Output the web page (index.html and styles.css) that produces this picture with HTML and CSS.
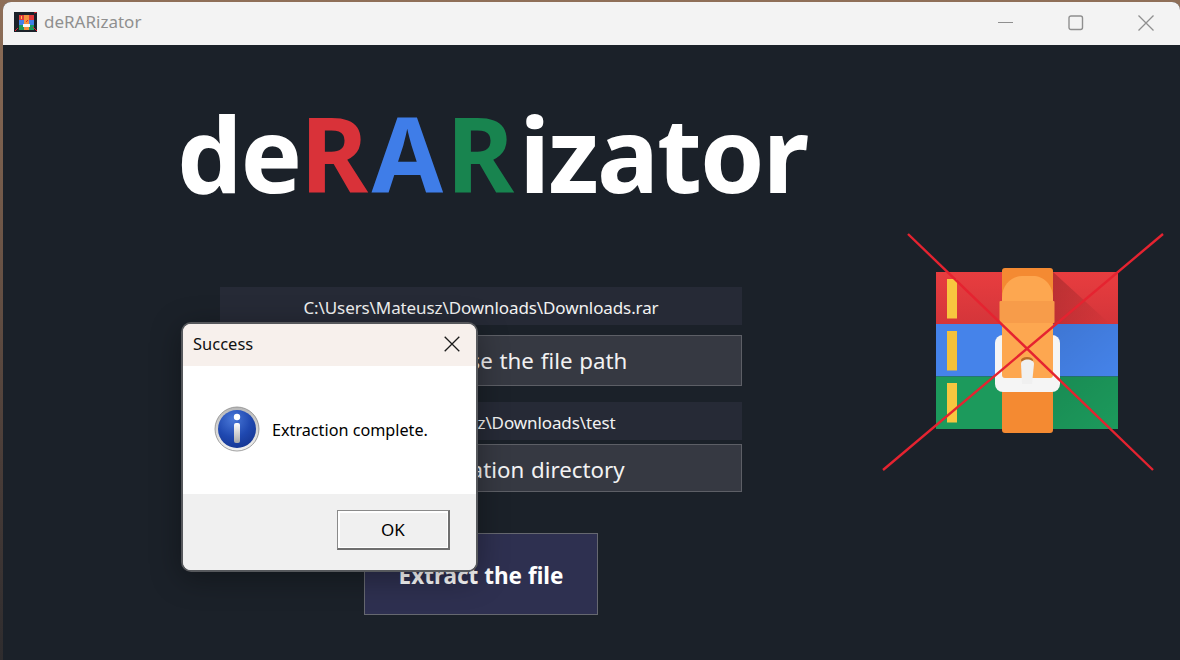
FILE: index.html
```html
<!DOCTYPE html>
<html lang="en">
<head>
<meta charset="utf-8">
<title>deRARizator</title>
<link rel="stylesheet" href="styles.css">
</head>
<body>
<div class="window">
  <header class="titlebar">
    <div class="app">
      <svg class="app-icon" width="23" height="20" viewBox="0 0 23 20">
        <rect width="23" height="20" fill="#1b2129"/>
        <rect x="5" y="3" width="15" height="5" fill="#e0393c"/>
        <rect x="5" y="8" width="15" height="5" fill="#4280e8"/>
        <rect x="5" y="13" width="15" height="5" fill="#1c9a5c"/>
        <rect x="10" y="3" width="5" height="15" fill="#f4913d"/>
        <rect x="9" y="12" width="7" height="3" fill="#f5f5f5"/>
        <path d="M1 19 4 16M19 15 23 19M20 1 23 0M12 10 14 8" stroke="#e8202c" stroke-width="1"/>
        <rect x="7" y="4" width="1" height="3" fill="#f6c842"/>
      </svg>
      <span class="app-name">deRARizator</span>
    </div>
    <div class="controls">
      <svg class="ctl" width="16" height="16" viewBox="0 0 16 16"><path d="M0 7.5H15" stroke="#8f8f8f" stroke-width="1.2"/></svg>
      <svg class="ctl" width="16" height="16" viewBox="0 0 16 16"><rect x="1" y="1" width="13.5" height="13.5" rx="2" fill="none" stroke="#8f8f8f" stroke-width="1.4"/></svg>
      <svg class="ctl" width="16" height="16" viewBox="0 0 16 16"><path d="M.5.5 15.5 15.5M15.5.5.5 15.5" stroke="#8f8f8f" stroke-width="1.3"/></svg>
    </div>
  </header>
  <main class="main">
    <h1 class="logo-title">de<span class="r1">R</span><span class="a1">A</span><span class="r2">R</span>izator</h1>
    <div class="content">
      <section class="form">
        <div class="path p1">C:\Users\Mateusz\Downloads\Downloads.rar</div>
        <button class="btn b1">Please choose the file path</button>
        <div class="path p2">C:\Users\Mateusz\Downloads\test</div>
        <button class="btn b2">Select destination directory</button>
        <button class="extract">Extract the file</button>
      </section>
      <svg class="rar" width="282" height="238" viewBox="882 233 282 238">
        <defs>
          <linearGradient id="red" x1="0" y1="0" x2="0" y2="1"><stop offset="0" stop-color="#e83d3f"/><stop offset="1" stop-color="#d4353a"/></linearGradient>
          <linearGradient id="sh" x1="0" y1="0" x2="1" y2="1"><stop offset="0" stop-color="#000" stop-opacity=".2"/><stop offset="1" stop-color="#000" stop-opacity="0"/></linearGradient>
        </defs>
        <rect x="936" y="272" width="182" height="52" fill="url(#red)"/>
        <rect x="936" y="324" width="182" height="52.500" fill="#4583ea"/>
        <rect x="936" y="376.500" width="182" height="52.500" fill="#1c9a5c"/>
        <path d="M1053 272 1110 324H1053Z" fill="url(#sh)"/>
        <path d="M1053 324H1118V376.500H1053Z" fill="url(#sh)" opacity=".5"/>
        <path d="M1053 376.500H1118V429H1053Z" fill="url(#sh)" opacity=".5"/>
        <rect x="947" y="279" width="10" height="39.500" fill="#f8c63f"/>
        <rect x="947" y="331" width="10" height="39.500" fill="#f3c13a"/>
        <rect x="947" y="383" width="10" height="39.500" fill="#f8c63f"/>
        <rect x="1002" y="268" width="51" height="165" rx="3" fill="#f48a32"/>
        <rect x="995" y="335" width="65" height="57" rx="8" fill="#f5f5f5"/>
        <rect x="1002" y="322" width="51" height="56" rx="3" fill="#fda750"/>
        <path d="M1002 322V298C1002 284 1012 276 1022 276H1033C1043 276 1053 284 1053 298V322Z" fill="#fda750"/>
        <rect x="999.500" y="301" width="55" height="22" rx="1" fill="#f79c4a"/>
        <ellipse cx="1027" cy="360" rx="6" ry="3" fill="#b86a25"/>
        <path d="M1022 384 1021 364C1021 358 1034 358 1034 364L1032 384Z" fill="#f0f0f0"/>
        <path d="M908 234 1153 470" stroke="#e52330" stroke-width="2.400"/>
        <path d="M1163 234 883 470" stroke="#e52330" stroke-width="2.400"/>
      </svg>
    </div>
  </main>
  <div class="dialog">
    <div class="dlg-head">
      <span class="dlg-title">Success</span>
      <svg width="16" height="16" viewBox="0 0 16 16"><path d="M.7.7 15.300 15.300M15.300.7.7 15.300" stroke="#1a1a1a" stroke-width="1.300"/></svg>
    </div>
    <div class="dlg-body">
      <svg class="info" width="46" height="46" viewBox="0 0 46 46">
        <defs>
          <radialGradient id="ib" cx=".4" cy=".25" r=".85"><stop offset="0" stop-color="#4a78d8"/><stop offset=".55" stop-color="#1f48b0"/><stop offset="1" stop-color="#14338e"/></radialGradient>
          <linearGradient id="ir" x1="0" y1="0" x2="0" y2="1"><stop offset="0" stop-color="#b8b8b8"/><stop offset="1" stop-color="#f2f2f2"/></linearGradient>
          <linearGradient id="is" x1="0" y1="0" x2="0" y2="1"><stop offset="0" stop-color="#fff"/><stop offset="1" stop-color="#a8a8a8"/></linearGradient>
        </defs>
        <circle cx="23" cy="23" r="22" fill="url(#ir)" stroke="#8a8a8a" stroke-width=".8"/>
        <circle cx="23" cy="23" r="19" fill="url(#ib)"/>
        <circle cx="23" cy="11" r="3.200" fill="#fff"/>
        <rect x="20" y="17" width="6" height="20" rx="2" fill="url(#is)"/>
      </svg>
      <span class="dlg-msg">Extraction complete.</span>
    </div>
    <div class="dlg-foot">
      <button class="ok">OK</button>
    </div>
  </div>
</div>
</body>
</html>
```
FILE: styles.css
```css
* { box-sizing: border-box; }
html, body { margin: 0; height: 100%; }
body {
  width: 1180px;
  height: 660px;
  overflow: hidden;
  padding: 2px 0 0 3px;
  background: linear-gradient(180deg, #8f6f58, #6e5647 35%, #4a3d38 70%, #2e2c2e);
  font-family: "Noto Sans", "Open Sans", sans-serif;
}
.window {
  position: relative;
  height: 658px;
  border-radius: 8px 8px 0 0;
  overflow: hidden;
  display: flex;
  flex-direction: column;
  background: #1b2129;
}
.titlebar {
  height: 43px;
  flex: none;
  background: #f3f3f3;
  display: flex;
  align-items: center;
  justify-content: space-between;
}
.app { display: flex; align-items: center; gap: 7px; padding: 0 0 3px 11px; }
.app-icon { display: block; }
.app-name { font-size: 17px; color: #8f8f8f; line-height: 20px; }
.controls { display: flex; gap: 54px; padding: 0 26px 2px 0; }
.ctl { display: block; }
.main { flex: 1; display: flex; flex-direction: column; color: #fff; }
.logo-title {
  margin: 48px 0 0 174px;
  font-size: 103.500px;
  line-height: 120px;
  letter-spacing: -2px;
  font-weight: 700;
  color: #fff;
  white-space: nowrap;
}
.r1 { color: #d93239; letter-spacing: 3.500px; }
.a1 { color: #3f7de8; letter-spacing: 3px; }
.r2 { color: #18844f; letter-spacing: 5px; }
.content { display: flex; margin-top: 74px; align-items: flex-start; }
.form { width: 522px; margin-left: 217px; display: flex; flex-direction: column; align-items: center; }
.path {
  width: 100%;
  background: #262a36;
  text-align: center;
  font-size: 17px;
  letter-spacing: -.1px;
  color: #f2f2f2;
  height: 38px;
  line-height: 38px;
  padding-top: 2px;
}
.btn {
  width: 100%;
  background: #363942;
  border: 1px solid #5d5f66;
  color: #f2f2f2;
  font: inherit;
  font-size: 22.300px;
  word-spacing: 1px;
  padding: 0;
}
.b1 { height: 51px; margin-top: 10px; padding-left: 9px; }
.p2 { margin-top: 16px; }
.b2 { height: 48px; margin-top: 4px; padding: 2px 0 0; }
.extract {
  width: 234px;
  height: 82px;
  margin-top: 41px;
  background: #2e3050;
  border: 1px solid #666870;
  color: #fff;
  font: inherit;
  font-size: 22.500px;
  font-weight: 700;
  padding: 2px 0 0;
}
.rar { display: block; margin: -54px 0 0 140px; flex: none; }
.dialog {
  position: absolute;
  left: 178px;
  top: 320px;
  width: 297px;
  height: 250px;
  border: 2px solid #56585c;
  border-radius: 10px;
  overflow: hidden;
  display: flex;
  flex-direction: column;
  background: #fff;
  box-shadow: 0 6px 30px rgba(0, 0, 0, .35);
}
.dlg-head {
  height: 42px;
  flex: none;
  background: #f7f0ec;
  display: flex;
  align-items: center;
  justify-content: space-between;
  padding: 0 16px 2px 10px;
  font-size: 16.500px;
  color: #111;
}
.dlg-title { padding-bottom: 2px; }
.dlg-head svg { display: block; }
.dlg-body {
  flex: 1;
  background: #fff;
  display: flex;
  align-items: center;
  gap: 12px;
  padding-left: 31px;
}
.info { margin-bottom: 2px; }
.dlg-msg { font-size: 16.200px; color: #000; }
.dlg-foot {
  height: 76px;
  flex: none;
  background: #f0f0f0;
  display: flex;
  justify-content: flex-end;
  padding: 16px 26px 0 0;
}
.ok {
  width: 113px;
  height: 40px;
  background: #f0f0f0;
  border-style: solid;
  border-width: 1px 2px 2px 1px;
  border-color: #8a8a8a #6f6f6f #6f6f6f #8a8a8a;
  box-shadow: inset 2px 2px 0 #fff, inset -1px -1px 0 #fff;
  font: inherit;
  font-size: 17px;
  color: #000;
  padding: 0;
}
```
